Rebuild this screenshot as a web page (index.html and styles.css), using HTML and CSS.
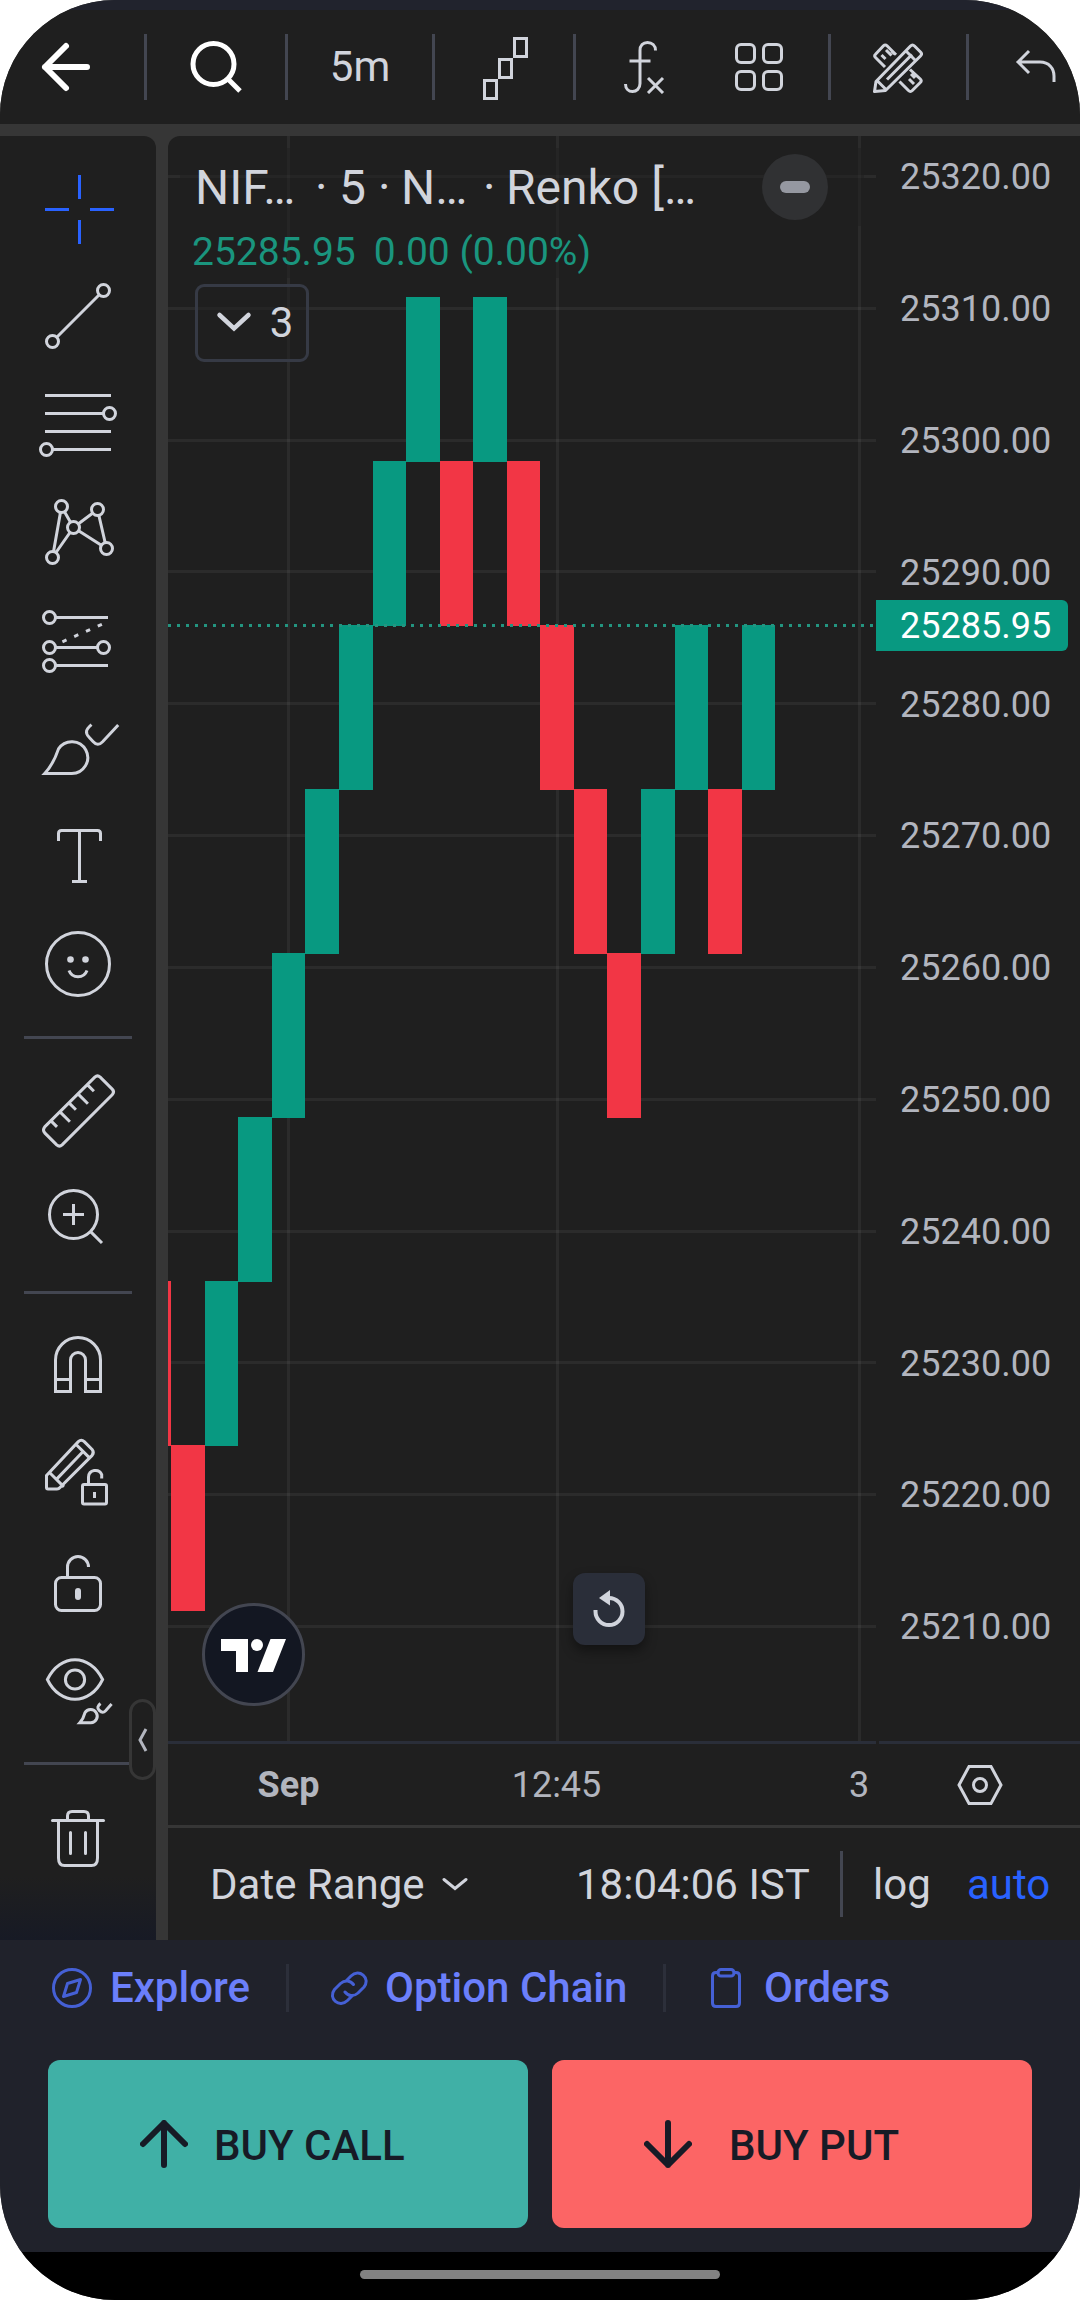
FILE: index.html
```
<!DOCTYPE html>
<html lang="en">
<head>
  <meta charset="UTF-8">
  <title>NIFTY Renko chart</title>
  <link rel="stylesheet" href="styles.css">
</head>
<body>
  <div class="phone">
    <div class="status-strip"></div>

    <header class="topbar">
      <button class="top-btn back">
        <svg width="54" height="54" viewBox="0 0 54 54" fill="none" stroke="#fff" stroke-width="6" stroke-linecap="round" stroke-linejoin="round"><path d="M48 27H6M27 6L6 27l21 21"/></svg>
      </button>
      <span class="vsep"></span>
      <button class="top-btn search">
        <svg width="54" height="54" viewBox="0 0 54 54" fill="none" stroke="#fff" stroke-width="5"><circle cx="25.5" cy="24" r="20.5"/><path d="M39 38l13 13"/></svg>
      </button>
      <span class="vsep"></span>
      <button class="top-btn interval">5m</button>
      <span class="vsep"></span>
      <button class="top-btn style">
        <svg width="45" height="63" viewBox="0 0 15 21" fill="none" stroke="currentColor"><path d="M.5 14.5h4v6h-4zM5.5 7.5h4v6h-4zM10.500.5h4v6h-4z"/></svg>
      </button>
      <span class="vsep"></span>
      <button class="top-btn fx">
        <svg width="42" height="54" viewBox="0 0 42 54" fill="none" stroke="currentColor" stroke-width="3"><path d="M32.500 10.500c0-5-3.500-8-8-8s-7.500 3-7.500 8v33c0 5-3.500 8-7.500 8s-7-3-7-7.500M6.500 21h21"/><path d="M25 38l15 15M40 38L25 53"/></svg>
      </button>
      <button class="top-btn layouts">
        <svg width="48" height="48" viewBox="0 0 48 48" fill="none" stroke="currentColor" stroke-width="3"><rect x="1.500" y="1.500" width="18" height="18" rx="4.500"/><rect x="28.500" y="1.500" width="18" height="18" rx="4.500"/><rect x="1.500" y="28.500" width="18" height="18" rx="4.500"/><rect x="28.500" y="28.500" width="18" height="18" rx="4.500"/></svg>
      </button>
      <span class="vsep"></span>
      <button class="top-btn drawings">
        <svg width="50" height="50" viewBox="0 0 50 50" fill="none" stroke="currentColor" stroke-width="3" stroke-linejoin="round">
          <path d="M1.500 48.500l1.500-10L37.500 3c1.500-1.500 2.500-1.500 4 0l6 6c1.500 1.500 1.500 2.500 0 4L12.500 47.500zM4 37.500l9 9M33 8l9.500 9.500M14 36.500L39 11.500"/>
          <path d="M12 24L2.500 14.500c-1.200-1.200-1.200-2 0-3.200l8-8.500c1.200-1.200 2.300-1.200 3.500 0l9 9M8.500 12l4 4M13 7l5.500 5.500M18.500 8l3 3M26.500 38.500l9 9c1.300 1.300 2.500 1.300 3.800 0l8-8c1.200-1.200 1.200-2.300 0-3.500L37 26.500M36 36l5 5M38 31l4 4"/>
        </svg>
      </button>
      <span class="vsep"></span>
      <button class="top-btn undo">
        <svg width="42" height="36" viewBox="0 0 42 36" fill="none" stroke="currentColor" stroke-width="3"><path d="M14 2L3 13l11 11M3 13h22c9 0 14 6.500 14 14v6"/></svg>
      </button>
    </header>

    <main class="workspace">
      <aside class="tools">
        <svg class="tool active" viewBox="0 0 28 28"><path d="M14.500 3v8M14.500 18v8M3 14.500h8M18 14.500h8"/></svg>
        <svg class="tool" viewBox="0 0 28 28"><circle cx="22.500" cy="5.500" r="2"/><circle cx="5.500" cy="22.500" r="2"/><path d="M7 21L21 7"/></svg>
        <svg class="tool" viewBox="0 0 28 28"><path d="M3 4.500h22M3 10.500h19.500M3 16.500h22M5.500 22.500H25"/><circle class="knob" cx="24.500" cy="10.500" r="2"/><circle class="knob" cx="3.500" cy="22.500" r="2"/></svg>
        <svg class="tool" viewBox="0 0 28 28"><path d="M8.500 5.500l4 7 8-6 3 13-11-7-7 10z"/><circle class="knob" cx="8.500" cy="5.500" r="2"/><circle class="knob" cx="20.500" cy="6.500" r="2"/><circle class="knob" cx="12.500" cy="12.500" r="2"/><circle class="knob" cx="5.500" cy="22.500" r="2"/><circle class="knob" cx="23.500" cy="19.500" r="2"/></svg>
        <svg class="tool" viewBox="0 0 28 28"><path d="M6.500 6.500H24M6.500 16.500h14M6.500 22.500H24"/><path d="M8.800 14.600L23 8.300" stroke-dasharray="1.500 2.800"/><circle class="knob" cx="4.500" cy="6.500" r="2"/><circle class="knob" cx="4.500" cy="16.500" r="2"/><circle class="knob" cx="22.500" cy="16.500" r="2"/><circle class="knob" cx="4.500" cy="22.500" r="2"/></svg>
        <svg class="tool" viewBox="0 0 28 28"><path d="M2.900 22.500h9a5.300 5.300 0 1 0-4.400-8.200C6.600 17 5.500 19.700 2.900 22.500z"/><path d="M18.500 6.200c-1.800 1.500-2.300 2.700-.8 4.200l1.300 1.400c1.200 1.300 2 1.300 3.200.1l5.200-5.600"/></svg>
        <svg class="tool" viewBox="0 0 28 28"><path d="M7.500 9V6.500q0-1 1-1h12q1 0 1 1V9M14.500 5.500v17M12 22.500h5"/></svg>
        <svg class="tool" viewBox="0 0 28 28"><circle cx="14" cy="14" r="10.500"/><circle class="dot" cx="11.500" cy="12.500" r="1.100"/><circle class="dot" cx="16.500" cy="12.500" r="1.100"/><path d="M11 16.200a3.200 3.200 0 0 0 6 0"/></svg>

        <hr class="tool-sep">

        <svg class="tool" viewBox="0 0 28 28"><path d="M2.900 19.300L19.600 2.700q.9-.8 1.800 0l4 4q.9.900 0 1.900L8.700 25.300q-.9.800-1.800 0l-4-4q-.8-1 0-2zM5 17.300l2 2M8 14.300l3.300 3.300M11 11.300l2.300 2.300M14 8.300l3.300 3.300M17.100 5.200l2.200 2.200"/></svg>
        <svg class="tool" viewBox="0 0 28 28"><circle cx="12.500" cy="12.500" r="8"/><path d="M12.500 9v7M9 12.500h7M18.200 18.200l3.800 3.800"/></svg>

        <hr class="tool-sep">

        <svg class="tool" viewBox="0 0 28 28"><path d="M6.500 22.500V12a7.500 7.500 0 0 1 15 0v10.500h-5V12a2.500 2.500 0 0 0-5 0v10.500zM6.500 18.500h5M16.500 18.500h5"/></svg>
        <svg class="tool" viewBox="0 0 28 28"><path d="M3.500 14.500L14.100 3.200q1-.9 2 0l2.600 2.600q.8 1 0 2L8 18.500q-.4.500-1 .5H4q-.5 0-.5-.5zM4.500 13.500l4.800 4.800M13.300 4.100l4.700 4.700M6.800 15.800L15.700 6.500"/><rect x="15.500" y="17.500" width="8" height="6.500" rx=".5"/><path d="M17.500 17.500V15a2.300 2.300 0 0 1 4.400-.8V15.500M19.500 20v2"/></svg>
        <svg class="tool" viewBox="0 0 28 28"><rect x="6.500" y="12.500" width="15" height="11" rx="2"/><path d="M10.500 12.500V9a3.500 3.500 0 0 1 7 0"/><path d="M14 17v2" stroke-width="2" stroke-linecap="round"/></svg>
        <svg class="tool" viewBox="0 0 28 28"><path d="M3.800 10.500C8 1.700 18 1.700 22.200 10.500 18 19.300 8 19.300 3.800 10.500z"/><circle cx="13" cy="10.500" r="3.200"/><path d="M14.600 24.900h3.700a2.200 2.200 0 1 0-2-3.300c-.3 1.200-.8 2.300-1.700 3.300z"/><path d="M21.500 18.500c-1 .8-1.200 1.500-.4 2.300s1.300.9 2.100.1l2-2.200"/></svg>

        <hr class="tool-sep">

        <svg class="tool" viewBox="0 0 28 28"><path d="M5.500 8.500h17" stroke-linecap="round"/><path d="M10.500 8.500V7q0-1.500 1.500-1.500h4q1.500 0 1.500 1.500v1.500M7.500 8.500V21q0 2.500 2 2.500h9q2 0 2-2.500V8.500"/><path d="M11.500 12.500v7M16.500 12.500v7" stroke-linecap="round"/></svg>

        <button class="collapse-tools">
          <svg width="12" height="24" viewBox="0 0 12 24" fill="none" stroke="#b2b5be" stroke-width="3"><path d="M9 1L3 12l6 11"/></svg>
        </button>
      </aside>

      <section class="panel">
        <div class="chart-row">
          <div class="pane">
            <svg class="plot" width="708" height="1605" viewBox="168 136 708 1605">
              <g class="grid">
                <path d="M168 176.500h708M168 308.500h708M168 440.500h708M168 571.500h708M168 703.500h708M168 835.500h708M168 967.500h708M168 1099.500h708M168 1231.500h708M168 1362.500h708M168 1494.500h708M168 1626.500h708"/>
                <path d="M288.500 136v1605M557.500 136v1605M859.500 136v1605"/>
              </g>
              <g class="down">
                <rect x="168" y="1281" width="3" height="165"/>
                <rect x="171" y="1445" width="34" height="166"/>
                <rect x="440" y="461" width="33" height="165"/>
                <rect x="507" y="461" width="33" height="165"/>
                <rect x="540" y="625" width="34" height="165"/>
                <rect x="574" y="789" width="33" height="165"/>
                <rect x="607" y="953" width="34" height="165"/>
                <rect x="708" y="789" width="34" height="165"/>
              </g>
              <g class="up">
                <rect x="205" y="1281" width="33" height="165"/>
                <rect x="238" y="1117" width="34" height="165"/>
                <rect x="272" y="953" width="33" height="165"/>
                <rect x="305" y="789" width="34" height="165"/>
                <rect x="339" y="625" width="34" height="165"/>
                <rect x="373" y="461" width="33" height="165"/>
                <rect x="406" y="297" width="34" height="165"/>
                <rect x="473" y="297" width="34" height="165"/>
                <rect x="641" y="789" width="34" height="165"/>
                <rect x="675" y="625" width="33" height="165"/>
                <rect x="742" y="625" width="33" height="165"/>
              </g>
              <path class="last-price" d="M168 625.500h708"/>
            </svg>

            <div class="legend">
              <div class="legend-title">
                <span class="t1">NIF…</span><span class="t2">·</span><span class="t3">5</span><span class="t4">·</span><span class="t5">N…</span><span class="t6">·</span><span class="t7">Renko […</span>
                <span class="minus"><i></i></span>
              </div>
              <div class="legend-values"><span>25285.95</span><span>0.00 (0.00%)</span></div>
              <button class="legend-toggle">
                <svg width="36" height="24" viewBox="0 0 36 24" fill="none" stroke="currentColor" stroke-width="4.500" stroke-linecap="round"><path d="M3.500 5L18 18.500 32.500 5"/></svg>
                3
              </button>
            </div>

            <div class="tv-logo">
              <svg width="66" height="34" viewBox="0 0 66 34" fill="#fff"><path d="M0 0h27v33H15V12H0zM49.500 0H65L52 33H36.500z"/><circle cx="36" cy="6" r="6"/></svg>
            </div>

            <button class="reset">
              <svg width="36" height="42" viewBox="0 0 36 42" fill="none" stroke="currentColor" stroke-width="4"><path d="M4.500 21v1.500a13.500 13.500 0 1 0 13.500-13.500"/><path d="M19 1v15.500L8 9z" fill="currentColor" stroke="none"/></svg>
            </button>
          </div>

          <div class="price-axis">
            <span>25320.00</span>
            <span>25310.00</span>
            <span>25300.00</span>
            <span>25290.00</span>
            <span>25280.00</span>
            <span>25270.00</span>
            <span>25260.00</span>
            <span>25250.00</span>
            <span>25240.00</span>
            <span>25230.00</span>
            <span>25220.00</span>
            <span>25210.00</span>
            <strong class="price-tag">25285.95</strong>
          </div>
        </div>

        <div class="time-row">
          <div class="time-axis">
            <b>Sep</b><span>12:45</span><span class="last">3</span>
          </div>
          <div class="axis-corner">
            <svg width="46" height="42" viewBox="0 0 46 42" fill="none" stroke="currentColor" stroke-width="3"><path d="M12 2.500h22L44 21 34 39.500H12L2 21z"/><circle cx="23" cy="21" r="6.500"/></svg>
          </div>
        </div>

        <footer class="range-bar">
          <span class="range">Date Range</span>
          <svg width="26" height="15" viewBox="0 0 26 15" fill="none" stroke="currentColor" stroke-width="3" stroke-linecap="round"><path d="M2 2.500l11 9 11-9"/></svg>
          <span class="clock">18:04:06 IST</span>
          <span class="vsep"></span>
          <span class="log">log</span>
          <span class="auto">auto</span>
        </footer>
      </section>
    </main>

    <section class="trade">
      <nav class="links">
        <a class="link explore">
          <svg width="40" height="40" viewBox="0 0 40 40"><circle cx="20" cy="20" r="18.500"/><path d="M28.500 11.500l-4 13-13 4 4-13z"/></svg>
          Explore
        </a>
        <span class="link-sep"></span>
        <a class="link chain">
          <svg width="38" height="38" viewBox="0 0 38 38"><path d="M17 11l4-4c8-8 20 2 13 11l-6 6c-4.500 4-10 3-13-1"/><path d="M22 27l-4.500 4.500c-8 8-20-2-13-11l6-6c4.500-4 10-3 13 1"/></svg>
          Option Chain
        </a>
        <span class="link-sep"></span>
        <a class="link orders">
          <svg width="30" height="40" viewBox="0 0 30 40"><path d="M7 4.500H5Q1.500 4.500 1.500 8v27q0 3.500 3.500 3.500h20q3.500 0 3.500-3.500V8q0-3.500-3.500-3.500h-2"/><rect x="7" y="1.500" width="16" height="6.500" rx="3"/></svg>
          Orders
        </a>
      </nav>
      <div class="actions">
        <button class="buy call">
          <svg width="48" height="48" viewBox="0 0 48 48"><path d="M24 45V3M3 24L24 3l21 21"/></svg>
          <span>BUY CALL</span>
        </button>
        <button class="buy put">
          <svg width="48" height="48" viewBox="0 0 48 48"><path d="M24 3v42M3 24l21 21 21-21"/></svg>
          <span>BUY PUT</span>
        </button>
      </div>
    </section>

    <div class="nav-area"><span class="home-pill"></span></div>
  </div>
</body>
</html>
```
FILE: styles.css
```
* {
  box-sizing: border-box;
}

body {
  margin: 0;
  background: #fff;
  font-family: Roboto, sans-serif;
  color: #d1d4dc;
}

button {
  border: none;
  padding: 0;
  background: none;
  color: inherit;
  font: inherit;
}

svg {
  display: block;
  flex: none;
}

.phone {
  width: 1080px;
  height: 2300px;
  display: flex;
  flex-direction: column;
  overflow: hidden;
  border-radius: 115px;
  background: #363636;
}

.status-strip {
  height: 10px;
  background: #21232d;
}

/* top toolbar */
.topbar {
  height: 114px;
  margin-bottom: 12px;
  display: flex;
  align-items: center;
  background: #1f1f1f;
  font-size: 42px;
}

.vsep {
  flex: none;
  width: 3px;
  height: 66px;
  background: #434651;
}

.top-btn {
  flex: none;
  display: flex;
  align-items: center;
  justify-content: center;
}

.back {
  width: 144px;
  padding-right: 12px;
}

.search {
  width: 138px;
  padding-right: 2px;
}

.interval {
  width: 144px;
  padding-bottom: 2px;
}

.style {
  width: 138px;
  padding: 3px 0 0 3px;
}

.fx {
  width: 132px;
  padding-left: 3px;
}

.layouts {
  width: 120px;
  padding-right: 18px;
}

.drawings {
  width: 135px;
  padding: 2px 2px 0 0;
}

.undo {
  width: 111px;
  padding-left: 23px;
}

/* workspace */
.workspace {
  height: 1804px;
  display: flex;
  gap: 12px;
}

.tools {
  position: relative;
  width: 156px;
  padding-top: 30px;
  display: flex;
  flex-direction: column;
  align-items: center;
  gap: 24px;
  border-top-right-radius: 12px;
  background: linear-gradient(#1f1f1f 96.500%, #171a25);
}

.tool {
  width: 84px;
  height: 84px;
  fill: none;
  stroke: #d1d4dc;
  stroke-width: 1;
}

.tool.active {
  stroke: #2962ff;
}

.tool .knob {
  fill: #1f1f1f;
}

.tool .dot {
  fill: #d1d4dc;
  stroke: none;
}

.tool-sep {
  width: 108px;
  height: 3px;
  margin: 6px 0;
  border: none;
  background: #434651;
}

.collapse-tools {
  position: absolute;
  left: 129px;
  top: 1563px;
  width: 27px;
  height: 81px;
  display: flex;
  align-items: center;
  justify-content: center;
  border: 3px solid #363636;
  border-radius: 14px;
  background: #1f1f1f;
}

.panel {
  width: 912px;
  display: flex;
  flex-direction: column;
  border-top-left-radius: 12px;
  overflow: hidden;
  background: #1f1f1f;
}

.chart-row {
  height: 1605px;
  display: flex;
}

.pane {
  position: relative;
  width: 708px;
}

.grid path {
  fill: none;
  stroke: #f2f2f2;
  stroke-opacity: .06;
  stroke-width: 3;
}

.up {
  fill: #089981;
}

.down {
  fill: #f23645;
}

.last-price {
  stroke: #239580;
  stroke-width: 3;
  stroke-dasharray: 3 6;
}

/* legend over the plot */
.legend {
  position: absolute;
  left: 12px;
  top: 12px;
  width: 684px;
}

.legend-title {
  height: 78px;
  padding-left: 15px;
  display: flex;
  align-items: center;
  background: rgba(31, 31, 31, .5);
  font-size: 48px;
  white-space: nowrap;
}

.t1 { width: 120px; }
.t2 { width: 24px; }
.t3 { width: 39px; }
.t4 { width: 23px; }
.t5 { width: 82px; }
.t6 { width: 23px; }
.t7 { width: 256px; }

.minus {
  width: 66px;
  height: 66px;
  display: flex;
  align-items: center;
  justify-content: center;
  border-radius: 50%;
  background: #303133;
}

.minus i {
  width: 30px;
  height: 12px;
  border-radius: 6px;
  background: #9598a1;
}

.legend-values {
  width: 420px;
  height: 52px;
  padding-left: 12px;
  display: flex;
  align-items: center;
  gap: 18px;
  background: rgba(31, 31, 31, .5);
  color: #1a957e;
  font-size: 39px;
}

.legend-toggle {
  width: 114px;
  height: 78px;
  margin: 6px 0 0 15px;
  padding: 0 0 2px 5px;
  display: flex;
  align-items: center;
  justify-content: center;
  gap: 18px;
  border: 3px solid #363a45;
  border-radius: 9px;
  background: rgba(31, 31, 31, .5);
  font-size: 42px;
}

.tv-logo {
  position: absolute;
  left: 34px;
  top: 1467px;
  width: 103px;
  height: 103px;
  padding-top: 2px;
  display: flex;
  align-items: center;
  justify-content: center;
  border: 3px solid #434651;
  border-radius: 50%;
  background: #131722;
}

.reset {
  position: absolute;
  left: 405px;
  top: 1437px;
  width: 72px;
  height: 72px;
  padding-top: 2px;
  display: flex;
  align-items: center;
  justify-content: center;
  border-radius: 12px;
  background: #2a2e39;
  box-shadow: 0 6px 12px rgba(0, 0, 0, .4);
}

/* axes */
.price-axis {
  position: relative;
  width: 204px;
  color: #b2b5be;
  font-size: 36px;
}

.price-axis span {
  height: 131.800px;
  padding-left: 24px;
  display: flex;
  align-items: center;
}

.price-axis span:first-child {
  margin-top: -24.500px;
}

.price-tag {
  position: absolute;
  left: 0;
  top: 464px;
  width: 192px;
  height: 51px;
  padding-left: 24px;
  border-radius: 0 6px 6px 0;
  background: #089981;
  color: #fff;
  font-weight: 400;
  line-height: 53px;
}

.time-row {
  height: 87px;
  display: flex;
  gap: 3px;
  border-bottom: 3px solid #363636;
  color: #b2b5be;
  font-size: 36px;
}

.time-axis {
  width: 708px;
  display: grid;
  grid-template-columns: 241px 295px 1fr;
  align-items: center;
  border-top: 3px solid #2a2e39;
  text-align: center;
}

.last {
  padding-left: 138px;
}

.axis-corner {
  flex: 1;
  padding-left: 78px;
  display: flex;
  align-items: center;
  border-top: 3px solid #2a2e39;
  color: #d1d4dc;
}

.range-bar {
  height: 112px;
  padding-left: 42px;
  display: flex;
  align-items: center;
  font-size: 42px;
  white-space: nowrap;
}

.range {
  width: 232px;
}

.clock {
  width: 264px;
  margin-left: 108px;
}

.log {
  margin-left: 30px;
  width: 94px;
}

.auto {
  color: #2962ff;
}

/* trade panel */
.trade {
  height: 312px;
  background: #20222b;
}

.links {
  height: 120px;
  padding: 0 0 25px 52px;
  display: flex;
  align-items: center;
  font-size: 42px;
  font-weight: 500;
  white-space: nowrap;
}

.link {
  display: flex;
  align-items: center;
  gap: 18px;
  color: #6b7ffb;
}

.link svg {
  fill: none;
  stroke: #4560d5;
  stroke-width: 3;
  stroke-linecap: round;
  stroke-linejoin: round;
}

.explore {
  width: 234px;
}

.chain {
  width: 374px;
  padding-left: 41px;
  gap: 17px;
}

.orders {
  padding-left: 45px;
  gap: 23px;
}

.link-sep {
  flex: none;
  width: 3px;
  height: 48px;
  background: #2c2f3a;
}

.actions {
  padding: 0 48px;
  display: flex;
  gap: 24px;
}

.buy {
  flex: 1;
  height: 168px;
  padding-left: 92px;
  display: flex;
  align-items: center;
  border-radius: 12px;
  color: #171b26;
  font-size: 42px;
  font-weight: 500;
}

.buy svg {
  fill: none;
  stroke: #171b26;
  stroke-width: 6;
  stroke-linecap: round;
  stroke-linejoin: round;
}

.buy span {
  padding-top: 2px;
}

.call {
  gap: 26px;
  background: #40b0a6;
}

.put {
  gap: 37px;
  background: #fc6565;
}

.nav-area {
  height: 48px;
  padding-top: 18px;
  display: flex;
  justify-content: center;
  background: #000;
}

.home-pill {
  width: 360px;
  height: 9px;
  border-radius: 5px;
  background: #828282;
}
```
